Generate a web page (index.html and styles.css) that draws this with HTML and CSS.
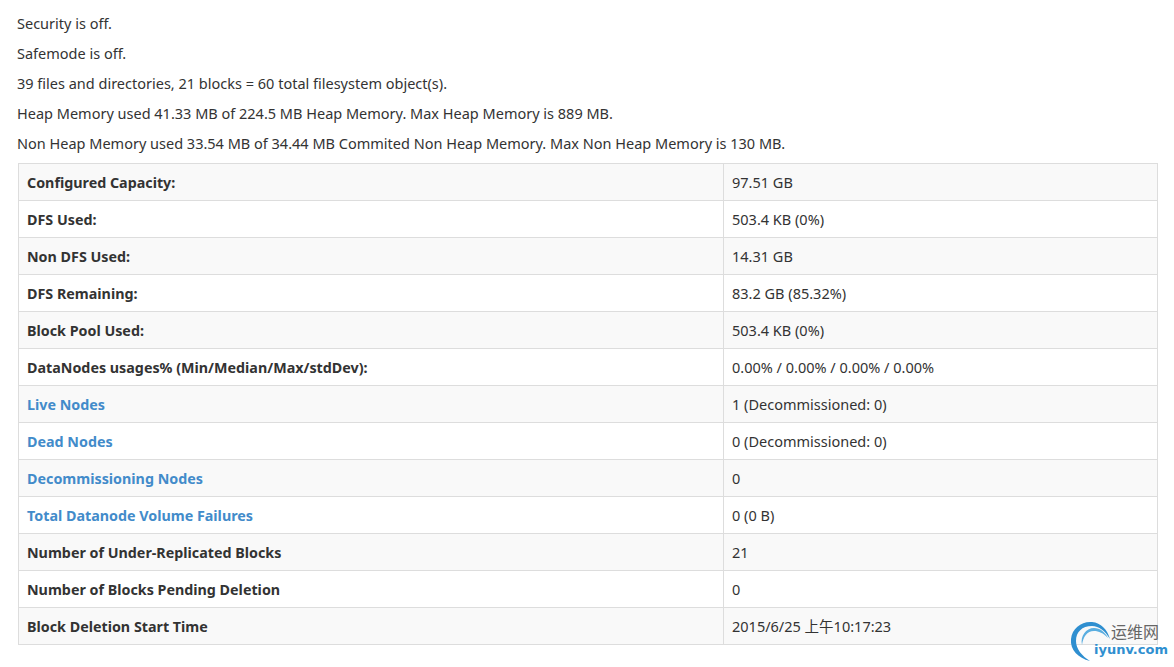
FILE: index.html
```html
<!DOCTYPE html>
<html lang="en">
<head>
<meta charset="utf-8">
<title>Overview</title>
<link rel="stylesheet" href="styles.css">
</head>
<body>
<main class="page">
<p>Security is off.</p>
<p>Safemode is off.</p>
<p>39 files and directories, 21 blocks = 60 total filesystem object(s).</p>
<p>Heap Memory used 41.33 MB of 224.5 MB Heap Memory. Max Heap Memory is 889 MB.</p>
<p>Non Heap Memory used 33.54 MB of 34.44 MB Commited Non Heap Memory. Max Non Heap Memory is 130 MB.</p>
<table class="summary">
<tr><th>Configured Capacity:</th><td>97.51 GB</td></tr>
<tr><th>DFS Used:</th><td>503.4 KB (0%)</td></tr>
<tr><th>Non DFS Used:</th><td>14.31 GB</td></tr>
<tr><th>DFS Remaining:</th><td>83.2 GB (85.32%)</td></tr>
<tr><th>Block Pool Used:</th><td>503.4 KB (0%)</td></tr>
<tr><th>DataNodes usages% (Min/Median/Max/stdDev):</th><td>0.00% / 0.00% / 0.00% / 0.00%</td></tr>
<tr><th><a href="#live">Live Nodes</a></th><td>1 (Decommissioned: 0)</td></tr>
<tr><th><a href="#dead">Dead Nodes</a></th><td>0 (Decommissioned: 0)</td></tr>
<tr><th><a href="#decom">Decommissioning Nodes</a></th><td>0</td></tr>
<tr><th><a href="#fail">Total Datanode Volume Failures</a></th><td>0 (0 B)</td></tr>
<tr><th>Number of Under-Replicated Blocks</th><td>21</td></tr>
<tr><th>Number of Blocks Pending Deletion</th><td>0</td></tr>
<tr><th>Block Deletion Start Time</th><td>2015/6/25 上午10:17:23</td></tr>
</table>
</main>
<div class="watermark">
<svg class="wm-logo" width="44" height="46" viewBox="0 0 44 46" aria-hidden="true">
<path d="M21 43C9 40 1 32 2 21C3 10 13 3 23 4C32 5 38 11 41 21C36 13 30 8 23 8C13 8 7 14 7 23C7 31 13 38 21 43Z" fill="#2f8fd0"/>
<path d="M13 27C11 18 17 10 25 10C31 10 36 14 39 20C34 15 30 13 25 13C18 13 14 19 13 27Z" fill="#5aaee0"/>
</svg>
<span class="wm-cn">运维网</span>
<span class="wm-en">iyunv.com</span>
</div>
</body>
</html>
```
FILE: styles.css
```css
html, body {
  margin: 0;
  padding: 0;
  background: #fff;
  height: 667px;
  overflow: hidden;
}
body {
  font-family: "Noto Sans", "Noto Sans CJK SC", sans-serif;
  font-size: 14.5px;
  line-height: 20px;
  color: #333;
  position: relative;
}
.page {
  padding: 13px 16px 0 17px;
}
p {
  margin: 0 0 10px;
}
.summary {
  width: 1140px;
  margin: 0 0 0 1px;
  border-collapse: collapse;
  table-layout: fixed;
}
.summary tr:nth-child(odd) {
  background: #f9f9f9;
}
.summary th, .summary td {
  height: 36px;
  padding: 8px;
  border: 1px solid #ddd;
  text-align: left;
  vertical-align: middle;
  box-sizing: border-box;
}
.summary th {
  width: 705px;
  padding: 9px 8px 7px;
  font-size: 14.3px;
  font-weight: 700;
}
.summary td {
  font-weight: 400;
}
.summary a {
  color: #428bca;
  text-decoration: none;
}
.watermark {
  position: absolute;
  left: 1066px;
  top: 618px;
  width: 108px;
  height: 46px;
}
.wm-logo {
  position: absolute;
  left: 3px;
  top: 0;
}
.wm-cn {
  position: absolute;
  left: 45px;
  top: 5px;
  font-size: 16px;
  line-height: 18px;
  color: #666;
}
.wm-en {
  position: absolute;
  left: 28px;
  top: 23px;
  font-family: "DejaVu Sans", sans-serif;
  font-size: 13px;
  line-height: 18px;
  font-weight: 700;
  color: #2f8fd0;
}
```
